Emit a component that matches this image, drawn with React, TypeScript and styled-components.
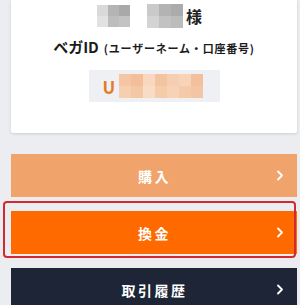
import React from "react";
import styled, {createGlobalStyle} from "styled-components";

const GlobalStyle = createGlobalStyle`
    html, body {
        margin: 0;
        padding: 0;
        background: #ebedf1;
        font-family: "Noto Sans CJK JP", "Noto Sans", sans-serif;
    }
`;

const Page = styled.div`
    width: 300px;
    height: 305px;
    overflow: hidden;
    padding: 0 3px 0 11px;
    box-sizing: border-box;
`;

const Card = styled.div`
    background: #fff;
    height: 133px;
    padding-top: 5px;
    box-sizing: border-box;
    border-radius: 0 0 2px 2px;
    box-shadow: 0 1px 3px rgba(0, 0, 0, 0.13);
    display: flex;
    flex-direction: column;
    align-items: center;
`;

const NameRow = styled.div`
    align-self: flex-start;
    display: flex;
    align-items: center;
    height: 22px;
    margin-left: 86px;
`;

const Honorific = styled.span`
    font-size: 16px;
    font-weight: 700;
    color: #222;
    line-height: 22px;
    margin-left: 3px;
`;

const Mosaic = styled.div<{cols: number; cell: number}>`
    display: grid;
    grid-template-columns: repeat(${p => p.cols}, ${p => p.cell}px);
    grid-auto-rows: ${p => p.cell}px;
`;

const Tile = styled.div<{c: string}>`
    background: ${p => p.c};
`;

const IdLabel = styled.div`
    margin-top: 11px;
    color: #1b1b1b;
    font-weight: 700;
    font-size: 15px;
    line-height: 18px;
    white-space: nowrap;
    small {
        font-size: 11px;
        margin-left: 5px;
        letter-spacing: 0.8px;
    }
`;

const IdBox = styled.div`
    margin-top: 13px;
    width: 131px;
    height: 32px;
    background: #eff0f4;
    display: flex;
    align-items: center;
    padding-left: 14px;
    box-sizing: border-box;
    gap: 4px;
`;

const IdPrefix = styled.span`
    color: #e57a26;
    font-weight: 700;
    font-size: 17px;
    line-height: 1;
`;

const Menu = styled.div`
    margin-top: 21px;
    display: flex;
    flex-direction: column;
    gap: 14px;
`;

const Highlight = styled.div`
    position: relative;
`;

const Ring = styled.div`
    position: absolute;
    top: -10px;
    bottom: -4px;
    left: -8px;
    right: 1px;
    border: 2.5px solid #d22a2f;
    border-radius: 4px;
    pointer-events: none;
`;

const MenuButton = styled.div<{bg: string}>`
    height: 43px;
    background: ${p => p.bg};
    color: #fff;
    display: grid;
    grid-template-columns: 1fr auto;
    align-items: center;
    padding-right: 13px;
    font-size: 14px;
    font-weight: 700;
    letter-spacing: 2.5px;
    span {
        text-align: center;
        padding-left: 22px;
    }
`;

const Chevron = () => (
    <svg width="8" height="11" viewBox="0 0 8 11">
        <path d="M2 1.5 L6 5.5 L2 9.5" fill="none" stroke="#fff" strokeWidth="1.8" strokeLinecap="round" strokeLinejoin="round"/>
    </svg>
);

const nameA = ["#d9d9d9", "#b4b4b4", "#a9a9a9", "#e2e2e2", "#bdbdbd", "#c3c3c3"];
const nameB = ["#cacaca", "#b3b3b3", "#ababab", "#d4d4d4", "#c2c2c2", "#bcbcbc"];
const idTiles = [
    "#f4c6a3", "#f2bf99", "#f8d8c0", "#f3c4a0", "#f6cfb2", "#f7d3b8", "#f2c19c",
    "#f6ceb0", "#f4c8a6", "#f9dcc6", "#f5cbaa", "#f7d2b5", "#f5caa9", "#f4c5a2",
];

const App = () => (
    <>
        <GlobalStyle/>
        <Page>
            <Card>
                <NameRow>
                    <Mosaic cols={3} cell={11}>
                        {nameA.map((c, i) => <Tile key={i} c={c}/>)}
                    </Mosaic>
                    <Mosaic cols={3} cell={12} style={{marginLeft: 17}}>
                        {nameB.map((c, i) => <Tile key={i} c={c}/>)}
                    </Mosaic>
                    <Honorific>様</Honorific>
                </NameRow>
                <IdLabel>ベガID<small>(ユーザーネーム・口座番号)</small></IdLabel>
                <IdBox>
                    <IdPrefix>U</IdPrefix>
                    <Mosaic cols={7} cell={12}>
                        {idTiles.map((c, i) => <Tile key={i} c={c}/>)}
                    </Mosaic>
                </IdBox>
            </Card>
            <Menu>
                <MenuButton bg="#f0a46c"><span>購入</span><Chevron/></MenuButton>
                <Highlight>
                    <MenuButton bg="#ff6a00"><span>換金</span><Chevron/></MenuButton>
                    <Ring/>
                </Highlight>
                <MenuButton bg="#1d2537"><span>取引履歴</span><Chevron/></MenuButton>
            </Menu>
        </Page>
    </>
);

export default App;
